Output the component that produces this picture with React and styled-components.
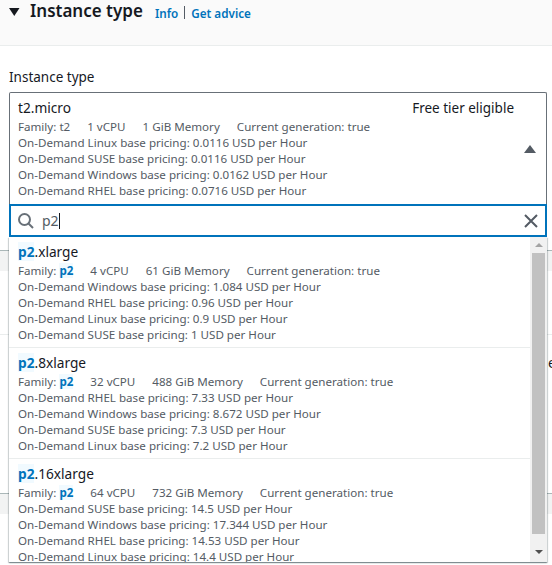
import styled, { createGlobalStyle } from "styled-components";

const GlobalStyle = createGlobalStyle`
  html, body {
    margin: 0;
    padding: 0;
    background: #fff;
  }
  body {
    font-family: "Noto Sans", "Open Sans", sans-serif;
    color: #16191f;
  }
`;

const results = [
  {
    suffix: ".xlarge",
    specs: ["4 vCPU", "61 GiB Memory"],
    prices: [
      "On-Demand Windows base pricing: 1.084 USD per Hour",
      "On-Demand RHEL base pricing: 0.96 USD per Hour",
      "On-Demand Linux base pricing: 0.9 USD per Hour",
      "On-Demand SUSE base pricing: 1 USD per Hour",
    ],
  },
  {
    suffix: ".8xlarge",
    specs: ["32 vCPU", "488 GiB Memory"],
    prices: [
      "On-Demand RHEL base pricing: 7.33 USD per Hour",
      "On-Demand Windows base pricing: 8.672 USD per Hour",
      "On-Demand SUSE base pricing: 7.3 USD per Hour",
      "On-Demand Linux base pricing: 7.2 USD per Hour",
    ],
  },
  {
    suffix: ".16xlarge",
    specs: ["64 vCPU", "732 GiB Memory"],
    prices: [
      "On-Demand SUSE base pricing: 14.5 USD per Hour",
      "On-Demand Windows base pricing: 17.344 USD per Hour",
      "On-Demand RHEL base pricing: 14.53 USD per Hour",
      "On-Demand Linux base pricing: 14.4 USD per Hour",
    ],
  },
];

const App = () => {
  return (
    <Page>
      <GlobalStyle />
      <Header>
        <svg width="11" height="8" viewBox="0 0 11 8">
          <path d="M0 0h10.5L5.25 8z" fill="#16191f" />
        </svg>
        <Title>Instance type</Title>
        <Links>
          <a>Info</a>
          <Sep />
          <a>Get advice</a>
        </Links>
      </Header>
      <Body>
        <Label>Instance type</Label>
        <Field>
          <Trigger>
            <TopRow>
              <Name>t2.micro</Name>
              <Tag>Free tier eligible</Tag>
            </TopRow>
            <Specs>
              <span>Family: t2</span>
              <span>1 vCPU</span>
              <span>1 GiB Memory</span>
              <span>Current generation: true</span>
            </Specs>
            <Line>On-Demand Linux base pricing: 0.0116 USD per Hour</Line>
            <Line>On-Demand SUSE base pricing: 0.0116 USD per Hour</Line>
            <Line>On-Demand Windows base pricing: 0.0162 USD per Hour</Line>
            <Line>On-Demand RHEL base pricing: 0.0716 USD per Hour</Line>
            <Caret width="12" height="8" viewBox="0 0 12 8">
              <path d="M6 0l6 8H0z" fill="#545b64" />
            </Caret>
          </Trigger>
          <Search>
            <svg width="16" height="16" viewBox="0 0 16 16" fill="none" stroke="#687078" strokeWidth="2">
              <circle cx="6.5" cy="6.5" r="5.5" />
              <path d="M10.5 10.5l4.5 4.5" />
            </svg>
            <Query>p2</Query>
            <Cursor />
            <ClearIcon width="14" height="14" viewBox="0 0 14 14" fill="none" stroke="#545b64" strokeWidth="2">
              <path d="M1 1l12 12M13 1L1 13" />
            </ClearIcon>
          </Search>
          <Menu>
            <List>
              {results.map((item) => (
                <Option key={item.suffix}>
                  <Name>
                    <Match>p2</Match>
                    {item.suffix}
                  </Name>
                  <Specs>
                    <span>
                      Family: <Match>p2</Match>
                    </span>
                    {item.specs.map((spec) => (
                      <span key={spec}>{spec}</span>
                    ))}
                    <span>Current generation: true</span>
                  </Specs>
                  {item.prices.map((price) => (
                    <Line key={price}>{price}</Line>
                  ))}
                </Option>
              ))}
            </List>
            <Scrollbar>
              <ArrowUp />
              <Thumb />
              <ArrowDown />
            </Scrollbar>
          </Menu>
        </Field>
      </Body>
      {/* table rows of the page that the open dropdown covers */}
      <Behind>
        <BehindHead />
        <BehindRow />
        <BehindCell>e</BehindCell>
        <BehindHead />
      </Behind>
    </Page>
  );
};

const Page = styled.div`
  width: 552px;
  height: 565px;
  overflow: hidden;
  position: relative;
`;

const Header = styled.div`
  height: 46px;
  box-sizing: border-box;
  background: #fafafa;
  border-bottom: 1px solid #eaeded;
  display: flex;
  align-items: flex-start;
  padding-left: 9px;
  gap: 10px;

  svg {
    margin-top: 8px;
  }
`;

const Title = styled.h2`
  margin: 1px 0 0;
  font-size: 17px;
  line-height: 20px;
  font-weight: 600;
  color: #16191f;
`;

const Links = styled.div`
  display: flex;
  align-items: center;
  height: 13px;
  margin: 6px 0 0 2px;
  font-size: 11.7px;
  font-weight: 600;
  color: #0073bb;
`;

const Sep = styled.span`
  width: 1px;
  height: 13px;
  background: #545b64;
  margin: 0 6px;
`;

const Body = styled.div`
  padding: 22px 5px 0 9px;
`;

const Label = styled.div`
  font-size: 13.5px;
  line-height: 18px;
  margin-bottom: 6px;
`;

const Field = styled.div`
  position: relative;
`;

const Trigger = styled.div`
  position: relative;
  height: 112px;
  box-sizing: border-box;
  border: 1px solid #687078;
  border-bottom: 0;
  border-radius: 2px 2px 0 0;
  padding: 5px 8px 0;
`;

const TopRow = styled.div`
  display: flex;
  justify-content: space-between;
  padding-right: 24px;
`;

const Name = styled.div`
  font-size: 13.7px;
  line-height: 20px;
  margin-bottom: 1px;
  color: #16191f;
`;

const Tag = styled.div`
  font-size: 13.5px;
  line-height: 20px;
`;

const Specs = styled.div`
  display: flex;
  gap: 17px;
  font-size: 11.6px;
  line-height: 16px;
  color: #545b64;
`;

const Line = styled.div`
  font-size: 11.6px;
  line-height: 16px;
  color: #545b64;
`;

const Caret = styled.svg`
  position: absolute;
  right: 10px;
  top: 52px;
`;

const Search = styled.div`
  height: 33px;
  box-sizing: border-box;
  border: 2px solid #0073bb;
  display: flex;
  align-items: center;
  padding-left: 7px;
  background: #fff;
`;

const Query = styled.span`
  font-size: 14px;
  margin-left: 8px;
  color: #545b64;
`;

const Cursor = styled.span`
  width: 1px;
  height: 16px;
  background: #16191f;
`;

const ClearIcon = styled.svg`
  margin-left: auto;
  margin-right: 7px;
`;

const Menu = styled.div`
  position: absolute;
  left: 0;
  right: 0;
  top: 145px;
  height: 325px;
  box-sizing: border-box;
  background: #fff;
  display: flex;
  overflow: hidden;
  box-shadow: 0 1px 1px 0 rgba(0, 28, 36, 0.3), 1px 1px 1px 0 rgba(0, 28, 36, 0.15),
    -1px 1px 1px 0 rgba(0, 28, 36, 0.15);
`;

const List = styled.div`
  flex: 1;
  min-width: 0;
`;

const Option = styled.div`
  height: 111px;
  box-sizing: border-box;
  padding: 5px 9px 0;
  border-bottom: 1px solid #eaeded;
`;

const Match = styled.span`
  color: #0073bb;
  font-weight: 700;
  background: #f1faff;
`;

const Scrollbar = styled.div`
  width: 17px;
  flex-shrink: 0;
  background: #f1f1f1;
  display: flex;
  flex-direction: column;
  align-items: center;
`;

const ArrowUp = styled.div`
  width: 0;
  height: 0;
  margin: 6px 0 6px;
  border-left: 4px solid transparent;
  border-right: 4px solid transparent;
  border-bottom: 4px solid #a3a3a3;
`;

const Thumb = styled.div`
  width: 13px;
  height: 281px;
  background: #c1c1c1;
  margin-bottom: 16px;
`;

const ArrowDown = styled.div`
  width: 0;
  height: 0;
  border-left: 4px solid transparent;
  border-right: 4px solid transparent;
  border-top: 4px solid #505050;
`;

const Behind = styled.div`
  margin-top: 13px;
`;

const BehindHead = styled.div`
  height: 20px;
  background: #f2f3f3;
  border-top: 1px solid #aab7b8;
`;

const BehindRow = styled.div`
  height: 63px;
  border-bottom: 1px solid #eaeded;
`;

const BehindCell = styled.div`
  height: 158px;
  box-sizing: border-box;
  padding: 18px 0 0 548px;
  font-size: 14px;
  line-height: 20px;
  overflow: hidden;
`;

export default App;
